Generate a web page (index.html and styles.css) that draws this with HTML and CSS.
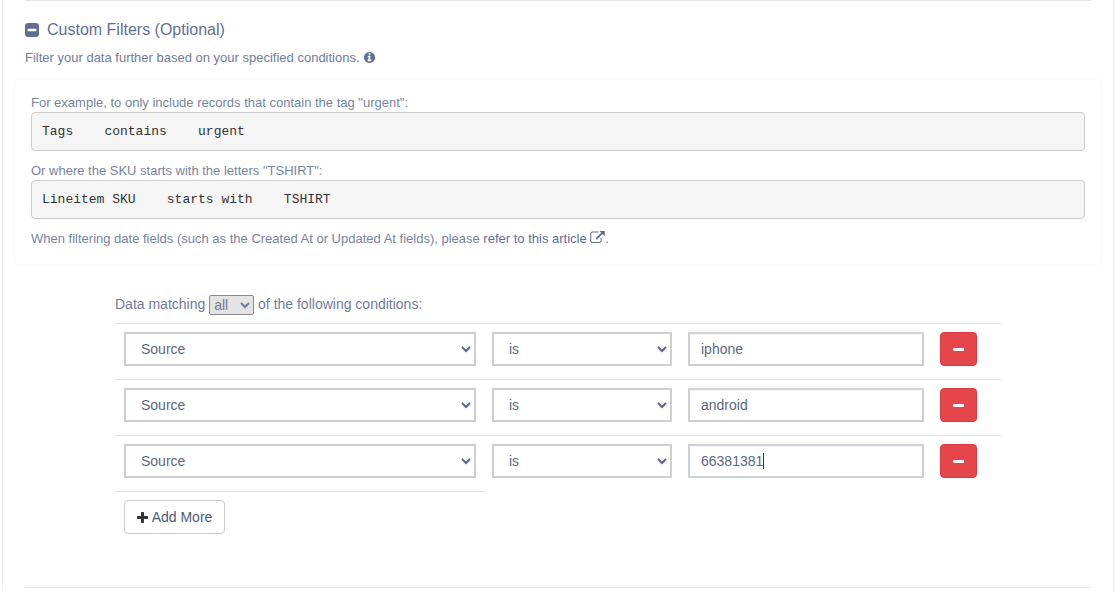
FILE: index.html
```html
<!DOCTYPE html>
<html lang="en">
<head>
<meta charset="utf-8">
<title>Custom Filters</title>
<link rel="stylesheet" href="styles.css">
</head>
<body>
<main class="panel">
  <hr class="rule">
  <h3 class="heading">
    <svg class="ico-square" viewBox="0 0 1408 1408"><path d="M1152 768v-128q0-26-19-45t-45-19h-768q-26 0-45 19t-19 45v128q0 26 19 45t45 19h768q26 0 45-19t19-45zm256-480v832q0 119-84.5 203.5t-203.5 84.5h-832q-119 0-203.5-84.5t-84.5-203.5v-832q0-119 84.5-203.5t203.5-84.5h832q119 0 203.5 84.5t84.5 203.5z"/></svg>
    <span>Custom Filters (Optional)</span>
  </h3>
  <p class="lead">Filter your data further based on your specified conditions.
    <svg class="ico-info" viewBox="0 0 1536 1536"><path d="M1024 1248v-160q0-14-9-23t-23-9h-96v-512q0-14-9-23t-23-9h-320q-14 0-23 9t-9 23v160q0 14 9 23t23 9h96v320h-96q-14 0-23 9t-9 23v160q0 14 9 23t23 9h448q14 0 23-9t9-23zm-128-896v-160q0-14-9-23t-23-9h-192q-14 0-23 9t-9 23v160q0 14 9 23t23 9h192q14 0 23-9t9-23zm640 416q0 209-103 385.500t-279.500 279.500-385.500 103-385.500-103-279.500-279.500-103-385.500 103-385.500 279.500-279.500 385.500-103 385.500 103 279.500 279.500 103 385.500z"/></svg>
  </p>
  <section class="well">
    <p class="note">For example, to only include records that contain the tag "urgent":</p>
    <pre class="code">Tags    contains    urgent</pre>
    <p class="note">Or where the SKU starts with the letters "TSHIRT":</p>
    <pre class="code">Lineitem SKU    starts with    TSHIRT</pre>
    <p class="note note-last">When filtering date fields (such as the Created At or Updated At fields), please <a class="link" href="#">refer to this article <svg class="ico-ext" viewBox="0 0 1792 1536"><path d="M1408 864v320q0 119-84.500 203.500t-203.500 84.500h-832q-119 0-203.500-84.500t-84.500-203.500v-832q0-119 84.500-203.500t203.500-84.500h704q14 0 23 9t9 23v64q0 14-9 23t-23 9h-704q-66 0-113 47t-47 113v832q0 66 47 113t113 47h832q66 0 113-47t47-113v-320q0-14 9-23t23-9h64q14 0 23 9t9 23zm384-864v512q0 26-19 45t-45 19-45-19l-176-176-652 652q-10 10-23 10t-23-10l-114-114q-10-10-10-23t10-23l652-652-176-176q-19-19-19-45t19-45 45-19h512q26 0 45 19t19 45z"/></svg></a>.</p>
  </section>
  <section class="conditions">
    <p class="match">Data matching <select class="mini"><option>all</option><option>any</option></select> of the following conditions:</p>
    <div class="row">
      <select class="field f-source"><option>Source</option></select>
      <select class="field f-op"><option>is</option></select>
      <div class="value"><input class="field f-value" type="text" value="iphone"></div>
      <button class="remove" type="button"><svg class="ico-minus" viewBox="0 0 1408 1408"><path d="M1408 608v192q0 40-28 68t-68 28h-1216q-40 0-68-28t-28-68v-192q0-40 28-68t68-28h1216q40 0 68 28t28 68z"/></svg></button>
    </div>
    <div class="row">
      <select class="field f-source"><option>Source</option></select>
      <select class="field f-op"><option>is</option></select>
      <div class="value"><input class="field f-value" type="text" value="android"></div>
      <button class="remove" type="button"><svg class="ico-minus" viewBox="0 0 1408 1408"><path d="M1408 608v192q0 40-28 68t-68 28h-1216q-40 0-68-28t-28-68v-192q0-40 28-68t68-28h1216q40 0 68 28t28 68z"/></svg></button>
    </div>
    <div class="row">
      <select class="field f-source"><option>Source</option></select>
      <select class="field f-op"><option>is</option></select>
      <div class="value"><input class="field f-value is-focus" type="text" value="66381381"><span class="caret"></span></div>
      <button class="remove" type="button"><svg class="ico-minus" viewBox="0 0 1408 1408"><path d="M1408 608v192q0 40-28 68t-68 28h-1216q-40 0-68-28t-28-68v-192q0-40 28-68t68-28h1216q40 0 68 28t28 68z"/></svg></button>
    </div>
    <div class="add-row">
      <button class="add" type="button"><svg class="ico-plus" viewBox="0 0 1408 1408"><path d="M1408 608v192q0 40-28 68t-68 28h-416v416q0 40-28 68t-68 28h-192q-40 0-68-28t-28-68v-416h-416q-40 0-68-28t-28-68v-192q0-40 28-68t68-28h416v-416q0-40 28-68t68-28h192q40 0 68 28t28 68v416h416q40 0 68 28t28 68z"/></svg> Add More</button>
    </div>
  </section>
  <hr class="rule rule-bottom">
</main>
</body>
</html>
```
FILE: styles.css
```css
* { box-sizing: border-box; }
html, body { margin: 0; padding: 0; height: 591px; overflow: hidden; background: #fff; }
body { font-family: "Liberation Sans", Arial, sans-serif; font-size: 14px; color: #6c7a99; }

.panel {
  height: 591px;
  margin: 0 1px 0 2px;
  padding: 0 22px;
  border-left: 1px solid #e8e8f1;
  border-right: 1px solid #e8e8f1;
  background: #fff;
  display: flex;
  flex-direction: column;
}
.rule { margin: 0; height: 1px; border: 0; background: #e4e4e7; flex: none; }
.rule-bottom { margin-top: 53px; }

.heading {
  margin: 19px 0 0;
  height: 20px;
  display: flex;
  align-items: center;
  gap: 8px;
  font-size: 16px;
  font-weight: 400;
  line-height: 20px;
  color: #5f6f94;
}
.ico-square { width: 14px; height: 14px; fill: #5f6f94; flex: none; }
.lead { margin: 9px 0 0; height: 18px; font-size: 13px; line-height: 18px; color: #6f7c9b; }
.ico-info { width: 11px; height: 11px; fill: #5f6f94; vertical-align: -1px; margin-left: 1px; }

.well {
  margin: 13px -10px 0;
  height: 184px;
  padding: 14px 16px 0;
  border-radius: 4px;
  box-shadow: 0 0 3px rgba(0, 0, 0, 0.06);
}
.note { margin: 0; height: 18px; font-size: 13px; line-height: 18px; color: #7784a0; }
.note-last { margin-top: 10px; }
.code {
  margin: 0 0 11px;
  height: 39px;
  padding: 11px 10px 0;
  border: 1px solid #ccc;
  border-radius: 4px;
  background: #f5f5f5;
  font-family: "Liberation Mono", "Courier New", monospace;
  font-size: 13px;
  line-height: 16px;
  color: #333;
}
.link { color: #5f6f94; text-decoration: none; }
.ico-ext { width: 15px; height: 12.500px; fill: #5f6f94; vertical-align: 0; }

.conditions { margin: 0 0 0 90px; width: 886px; padding-top: 30px; }
.match { margin: 0 0 9px; height: 20px; line-height: 20px; font-size: 14px; color: #6f7c9b; }
.mini {
  width: 45px;
  height: 20px;
  font-family: "Liberation Sans", Arial, sans-serif;
  font-size: 14px;
  color: #6f7c9b;
  border: 1px solid #8a8a8a;
  border-radius: 2px;
  background: #e4e4e4;
  vertical-align: -1px;
}
.row {
  display: flex;
  gap: 16px;
  height: 56px;
  padding: 8px 9px 0;
  border-top: 1px solid #e0e0e4;
}
.field {
  height: 34px;
  padding: 0 12px;
  border: 2px solid #cfcfcf;
  border-radius: 0;
  background: #fff;
  font-family: "Liberation Sans", Arial, sans-serif;
  font-size: 14px;
  color: #5b6780;
  outline: none;
}
select.field { padding-left: 11px; }
.f-source { width: 352px; }
.f-op { width: 180px; }
.value { position: relative; width: 236px; }
.f-value { width: 100%; padding: 0 11px; border-top-color: #d3d3d3; box-shadow: inset 0 1px 1px rgba(0,0,0,.05); }
.is-focus { border-color: #cdcfd9; }
.caret { position: absolute; left: 75px; top: 9px; width: 1px; height: 16px; background: #333; }
.remove {
  width: 37px;
  height: 34px;
  padding: 0;
  border: 1px solid #dc3a42;
  border-radius: 4px;
  background: #e4464c;
  display: flex;
  align-items: center;
  justify-content: center;
}
.ico-minus { width: 11px; height: 11px; fill: #fff; }
.add-row { width: 369px; padding: 8px 9px 0; border-top: 1px solid #e0e0e4; }
.add {
  width: 101px;
  height: 34px;
  padding: 0;
  border: 1px solid #ccc;
  border-radius: 4px;
  background: #fff;
  font-family: "Liberation Sans", Arial, sans-serif;
  font-size: 14px;
  color: #4f5b75;
  display: flex;
  align-items: center;
  justify-content: center;
  gap: 4px;
}
.ico-plus { width: 11px; height: 11px; fill: #333; }
```
